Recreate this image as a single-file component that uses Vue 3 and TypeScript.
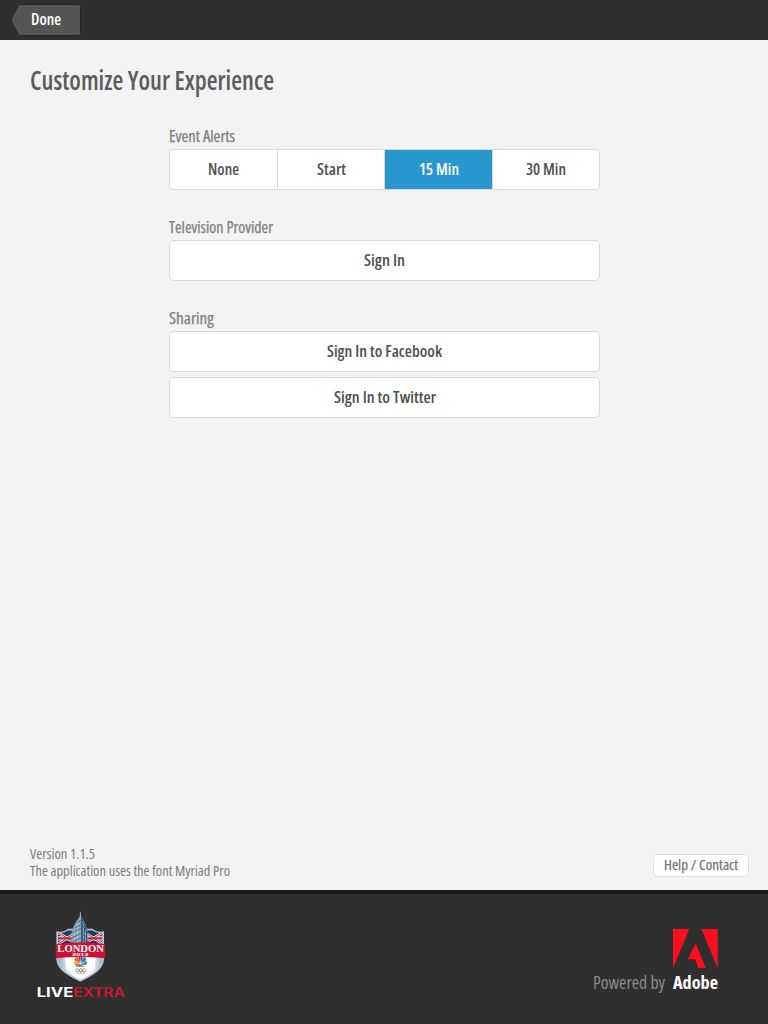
<script setup lang="ts">
import { h, ref } from 'vue'

interface FitProps {
  text: string
  width: number
}

// One line of condensed type, fitted to a fixed width on a shared baseline.
const FitText = (props: FitProps) =>
  h('svg', { width: props.width, height: 20 }, [
    h(
      'text',
      { x: 0, y: 15, textLength: props.width, lengthAdjust: 'spacingAndGlyphs' },
      props.text,
    ),
  ])
FitText.props = ['text', 'width']

const alerts: FitProps[] = [
  { text: 'None', width: 31 },
  { text: 'Start', width: 29 },
  { text: '15 Min', width: 40 },
  { text: '30 Min', width: 40 },
]
const selected = ref(2)

const sharing: FitProps[] = [
  { text: 'Sign In to Facebook', width: 115 },
  { text: 'Sign In to Twitter', width: 102 },
]
</script>

<template>
  <div class="screen">
    <header class="topbar">
      <button class="done">
        <svg class="done-shape" width="72" height="34" viewBox="0 0 72 34">
          <path d="M10.500 1.500H68.500a2 2 0 0 1 2 2v27a2 2 0 0 1-2 2H10.500Q9 32.500 8 31L1.500 18.500Q.7 17 1.500 15.500L8 3Q9 1.500 10.500 1.500Z" fill="#555" stroke="#242424" />
        </svg>
        <FitText class="fit done-label" text="Done" :width="30" />
      </button>
    </header>

    <main class="content">
      <h1 class="title"><FitText class="fit title-text" text="Customize Your Experience" :width="244" /></h1>
      <div class="settings">
        <section class="group">
          <FitText class="fit label" text="Event Alerts" :width="66" />
          <div class="box segments">
            <button
              v-for="(item, i) in alerts"
              :key="item.text"
              class="segment"
              :class="{ active: i === selected }"
              @click="selected = i"
            >
              <FitText class="fit action" :text="item.text" :width="item.width" />
            </button>
          </div>
        </section>
        <section class="group">
          <FitText class="fit label" text="Television Provider" :width="104" />
          <button class="box"><FitText class="fit action" text="Sign In" :width="41" /></button>
        </section>
        <section class="group">
          <FitText class="fit label" text="Sharing" :width="45" />
          <button v-for="item in sharing" :key="item.text" class="box">
            <FitText class="fit action" :text="item.text" :width="item.width" />
          </button>
        </section>
      </div>
      <div class="info">
        <div class="about">
          <FitText class="fit note" text="Version 1.1.5" :width="65" />
          <FitText class="fit note" text="The application uses the font Myriad Pro" :width="200" />
        </div>
        <button class="help"><FitText class="fit help-text" text="Help / Contact" :width="74" /></button>
      </div>
    </main>

    <footer class="footer">
      <svg class="london" width="100" height="100" viewBox="0 0 300 300">
        <defs>
          <clipPath id="shield"><path d="M84 84Q101 87 116 76H186Q201 87 217 84V164C215 190 184 208 151 224C119 208 87 190 84 164Z" /></clipPath>
          <linearGradient id="panel" x1="0" x2="1"><stop offset="0" stop-color="#8aa3b5" /><stop offset=".3" stop-color="#fff" /><stop offset=".7" stop-color="#fff" /><stop offset="1" stop-color="#8aa3b5" /></linearGradient>
        </defs>
        <path d="M79 79Q102 83 114 71H188Q200 83 222 79V165C220 192 188 214 151 230C114 214 81 192 79 165Z" fill="#b4c5cf" />
        <g clip-path="url(#shield)">
          <path d="M80 70H225V125H80Z" fill="#1b3a62" />
          <path d="M80 80L126 108M80 120L130 87M222 80L176 108M222 120L172 87" stroke="#dfe6ea" stroke-width="8" />
          <path d="M80 100H130M172 100H225" stroke="#edf1f3" stroke-width="13" />
          <path d="M80 80L126 108M80 120L130 87M222 80L176 108M222 120L172 87" stroke="#b82b3d" stroke-width="3" />
          <path d="M80 100H130M172 100H225" stroke="#c42439" stroke-width="7" />
          <path d="M80 145H225V230H80Z" fill="url(#panel)" />
          <path d="M104 150H198L194 190L151 222L108 190Z" fill="#fff" />
        </g>
        <path d="M151 20L153 35L163 49L172 76V124H125V76L139 49L149 35Z" fill="#8ba8bc" />
        <path d="M151 34L163 50L171 77V124H151Z" fill="#335673" />
        <path d="M151 20V120M143 50V120M134 75V120M160 50V120M166 75V120" stroke="#c7d7e1" stroke-width="2" />
        <path d="M140 54L151 47L162 54M134 69L151 59L168 69M127 83L151 71L172 83M127 98L151 86L172 98M127 112L151 99L172 112" fill="none" stroke="#476b86" stroke-width="3" />
        <path d="M77 118Q151 106 225 118V160Q151 152 77 160Z" fill="#cc1231" />
        <text class="london-name" x="82" y="140" textLength="140" lengthAdjust="spacingAndGlyphs">LONDON</text>
        <text class="london-year" x="126" y="152" textLength="50" lengthAdjust="spacingAndGlyphs">2012</text>
        <g transform="translate(151 179)">
          <path d="M-3 0H-16A6 6 0 0 1-15-11Z" fill="#f2ad24" />
          <path d="M-2-2L-16-12A6 6 0 0 1-6-20Z" fill="#ec692b" />
          <path d="M-1-4L-6-20A6 6 0 0 1 0-24Z" fill="#d52843" />
          <path d="M1-4L0-24A6 6 0 0 1 7-20Z" fill="#754798" />
          <path d="M2-2L7-20A6 6 0 0 1 16-12Z" fill="#2580be" />
          <path d="M3 0L16-11A6 6 0 0 1 17 0Z" fill="#3ba454" />
        </g>
        <text class="nbc" x="137" y="187" textLength="28" lengthAdjust="spacingAndGlyphs">NBC</text>
        <g fill="none" stroke-width="2">
          <circle cx="142" cy="196" r="5" stroke="#418bb9" /><circle cx="152" cy="196" r="5" stroke="#555" /><circle cx="162" cy="196" r="5" stroke="#d5475a" />
          <circle cx="147" cy="202" r="5" stroke="#d7a33e" /><circle cx="157" cy="202" r="5" stroke="#55a16c" />
        </g>
        <text class="live" x="20" y="276" textLength="110" lengthAdjust="spacingAndGlyphs">LIVE</text>
        <text class="live extra" x="130" y="276" textLength="154" lengthAdjust="spacingAndGlyphs">EXTRA</text>
      </svg>

      <div class="powered">
        <svg class="adobe" width="52" height="39" viewBox="0 0 156 117">
          <path d="M0 0H49L0 117ZM85 0H134V117ZM68 43L98 117H76L66 91H44Z" fill="#f9101c" />
          <path d="M140 2H144M142 2V5M147 5V2L149 4L151 2V5" fill="none" stroke="#82202a" />
        </svg>
        <div class="credit">
          <FitText class="fit powered-text" text="Powered by" :width="72" />
          <FitText class="fit adobe-text" text="Adobe" :width="45" />
        </div>
      </div>
    </footer>
  </div>
</template>

<style>
body {
  margin: 0;
}
</style>

<style scoped>
.screen {
  box-sizing: border-box;
  width: 768px;
  height: 1024px;
  display: flex;
  flex-direction: column;
  background: #f3f3f3;
  font-family: "Open Sans", "Noto Sans", sans-serif;
  overflow: hidden;
}
button {
  font: inherit;
  padding: 0;
  border: 0;
  cursor: pointer;
}
svg {
  display: block;
  flex: none;
}
.fit {
  overflow: visible;
  font-stretch: 75%;
}
.topbar {
  height: 40px;
  flex: none;
  background: #2f2f2f;
  padding: 3px 0 0 10px;
  box-sizing: border-box;
}
.done {
  display: grid;
  width: 72px;
  height: 34px;
  background: none;
}
.done > * {
  grid-area: 1 / 1;
}
.done-label {
  margin: 7px 0 0 21px;
  font-size: 16.5px;
  font-weight: 600;
  fill: #fff;
}
.content {
  flex: 1;
  display: flex;
  flex-direction: column;
}
.title {
  margin: 35px 0 0 30px;
  height: 20px;
}
.title-text {
  font-size: 26.5px;
  font-weight: 600;
  fill: #5c5c5c;
}
.settings {
  width: 431px;
  margin: 32px 0 0 169px;
}
.group {
  display: flex;
  flex-direction: column;
  margin-bottom: 28px;
}
.label {
  height: 22px;
  font-size: 16.5px;
  font-weight: 500;
  fill: #808080;
  stroke: #808080;
  stroke-width: 0.25px;
}
.box {
  box-sizing: border-box;
  width: 431px;
  height: 41px;
  display: flex;
  align-items: center;
  justify-content: center;
  background: #fff;
  border: 1px solid #d9d9d9;
  border-radius: 5px;
}
.box + .box {
  margin-top: 5px;
}
.segments {
  display: grid;
  grid-template-columns: 108px 107px 108px 106px;
  align-items: stretch;
  justify-content: stretch;
  overflow: hidden;
}
.segment {
  display: flex;
  align-items: center;
  justify-content: center;
  background: transparent;
  border-right: 1px solid #d9d9d9;
}
.segment:last-child {
  border-right: 0;
}
.segment.active {
  background: #2898cf;
  background-clip: padding-box;
}
.action {
  font-size: 16.5px;
  font-weight: 600;
  fill: #505050;
}
.active .action {
  fill: #fff;
}
.info {
  display: flex;
  justify-content: space-between;
  align-items: flex-start;
  margin: auto 19px 0 30px;
  height: 46px;
}
.about {
  display: flex;
  flex-direction: column;
}
.note {
  height: 17px;
  font-size: 14.5px;
  font-weight: 400;
  fill: #7c7c7c;
}
.help {
  box-sizing: border-box;
  width: 96px;
  height: 23px;
  margin-top: 10px;
  display: flex;
  align-items: center;
  justify-content: center;
  background: #fff;
  border: 1px solid #dedede;
  border-radius: 5px;
}
.help-text {
  height: 21px;
  font-size: 15px;
  font-weight: 500;
  fill: #747474;
  stroke: #747474;
  stroke-width: 0.25px;
}
.footer {
  box-sizing: border-box;
  height: 134px;
  flex: none;
  display: flex;
  justify-content: space-between;
  align-items: flex-start;
  background: #2f2f2f;
  border-top: 4px solid #1a1a1a;
  padding: 11px 45px 0 30px;
}
.london-name {
  font: 700 34px "Liberation Serif", serif;
  fill: #fff;
}
.london-year {
  font: 700 12px "Liberation Sans", sans-serif;
  fill: #fff;
}
.nbc {
  font: 700 8px "Liberation Sans", sans-serif;
  fill: #444;
}
.live {
  font: 700 39px Inter, sans-serif;
  fill: #fff;
}
.live.extra {
  font-weight: 600;
  fill: #d0162f;
}
.powered {
  display: flex;
  flex-direction: column;
  align-items: flex-end;
  padding-top: 24px;
}
.adobe {
  margin-right: -2px;
}
.credit {
  display: flex;
  gap: 8px;
  margin: 6px 5px 0 0;
}
.powered-text {
  font-size: 18.5px;
  font-weight: 400;
  fill: #8b8b8b;
}
.adobe-text {
  font-size: 18px;
  font-weight: 700;
  fill: #fff;
}
</style>
